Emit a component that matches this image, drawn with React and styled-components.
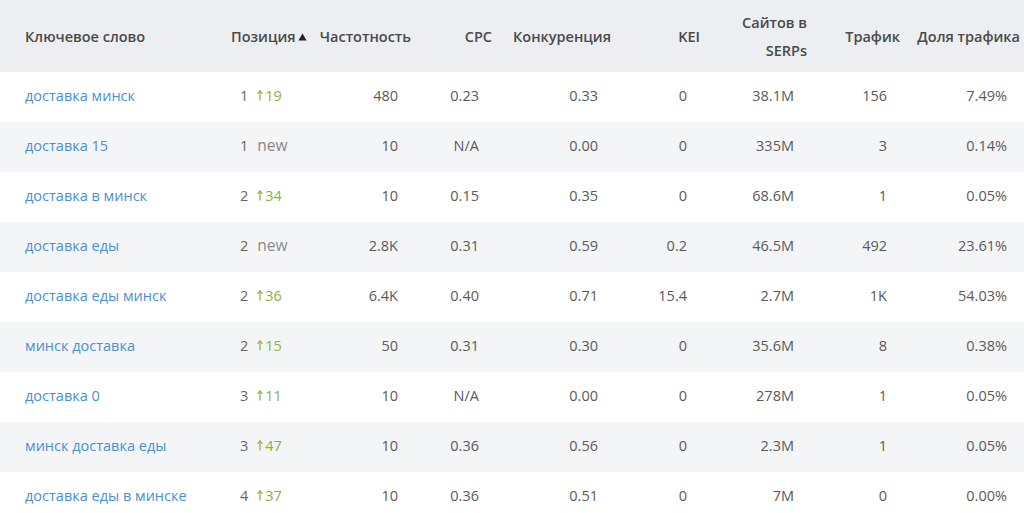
import React from 'react'
import styled, { createGlobalStyle } from 'styled-components'

const GlobalStyle = createGlobalStyle`
  html, body { margin: 0; padding: 0; background: #fff; }
  body { font-family: "Open Sans", "Liberation Sans", sans-serif; }
`

const COLS = '220px 96px 99px 81px 119px 89px 107px 93px 120px'

const Table = styled.div`
  width: 1024px;
  overflow: hidden;
`

const HeadRow = styled.div`
  display: grid;
  grid-template-columns: ${COLS};
  height: 72px;
  box-sizing: border-box;
  padding-top: 2px;
  background: #eceef1;
  align-items: center;
`

const Th = styled.div`
  font-size: 14.5px;
  font-weight: 600;
  color: #4a4a4a;
  line-height: 28px;
  text-align: ${p => (p.$left ? 'left' : 'right')};
  padding-left: ${p => p.$pl || 0}px;
  padding-right: ${p => (p.$left ? 0 : 4)}px;
  white-space: nowrap;
`

const Row = styled.div`
  display: grid;
  grid-template-columns: ${COLS};
  height: 50px;
  box-sizing: border-box;
  padding-bottom: 4px;
  align-items: center;
  background: ${p => (p.$odd ? '#f4f5f7' : '#fff')};
`

const Td = styled.div`
  font-size: 14.5px;
  color: #5a5a5a;
  text-align: right;
  padding-right: 17px;
  white-space: nowrap;
`

const KeyCell = styled.a`
  font-size: 14.5px;
  color: #4a90d0;
  padding-left: 25px;
  text-decoration: none;
  white-space: nowrap;
`

const PosCell = styled.div`
  display: flex;
  align-items: center;
  padding-left: 20px;
  font-size: 14.5px;
  color: #666;
`

const Change = styled.span`
  display: inline-flex;
  align-items: center;
  margin-left: 9px;
  color: ${p => (p.$new ? '#8a8a8a' : '#8db03a')};
  font-size: ${p => (p.$new ? 15.5 : 14.5)}px;
`

const Up = () => (
  <svg width="6" height="11" viewBox="0 0 6 11" style={{ marginRight: 2 }}>
    <path d="M3 1.5 V10.5" stroke="#8db03a" strokeWidth="1.2" />
    <path d="M0.6 4 L3 0.8 L5.4 4" fill="none" stroke="#8db03a" strokeWidth="1.2" />
  </svg>
)

const SortIcon = () => (
  <svg width="9" height="8" viewBox="0 0 9 8" style={{ marginLeft: 2, verticalAlign: 1 }}>
    <path d="M4.5 0.5 L8.6 7.5 L0.4 7.5 Z" fill="#222" />
  </svg>
)

const rows = [
  ['доставка минск', 1, '19', '480', '0.23', '0.33', '0', '38.1M', '156', '7.49%'],
  ['доставка 15', 1, 'new', '10', 'N/A', '0.00', '0', '335M', '3', '0.14%'],
  ['доставка в минск', 2, '34', '10', '0.15', '0.35', '0', '68.6M', '1', '0.05%'],
  ['доставка еды', 2, 'new', '2.8K', '0.31', '0.59', '0.2', '46.5M', '492', '23.61%'],
  ['доставка еды минск', 2, '36', '6.4K', '0.40', '0.71', '15.4', '2.7M', '1K', '54.03%'],
  ['минск доставка', 2, '15', '50', '0.31', '0.30', '0', '35.6M', '8', '0.38%'],
  ['доставка 0', 3, '11', '10', 'N/A', '0.00', '0', '278M', '1', '0.05%'],
  ['минск доставка еды', 3, '47', '10', '0.36', '0.56', '0', '2.3M', '1', '0.05%'],
  ['доставка еды в минске', 4, '37', '10', '0.36', '0.51', '0', '7M', '0', '0.00%'],
]

export default function App() {
  return (
    <Table>
      <GlobalStyle />
      <HeadRow>
        <Th $left $pl={25}>Ключевое слово</Th>
        <Th $left $pl={11}>Позиция<SortIcon /></Th>
        <Th>Частотность</Th>
        <Th>CPC</Th>
        <Th>Конкуренция</Th>
        <Th>KEI</Th>
        <Th>Сайтов в<br />SERPs</Th>
        <Th>Трафик</Th>
        <Th>Доля трафика</Th>
      </HeadRow>
      {rows.map((r, i) => (
        <Row key={r[0]} $odd={i % 2 === 1}>
          <div><KeyCell href="#">{r[0]}</KeyCell></div>
          <PosCell>
            {r[1]}
            {r[2] === 'new'
              ? <Change $new>new</Change>
              : <Change><Up />{r[2]}</Change>}
          </PosCell>
          {r.slice(3).map((v, j) => (
            <Td key={j}>{v}</Td>
          ))}
        </Row>
      ))}
    </Table>
  )
}
